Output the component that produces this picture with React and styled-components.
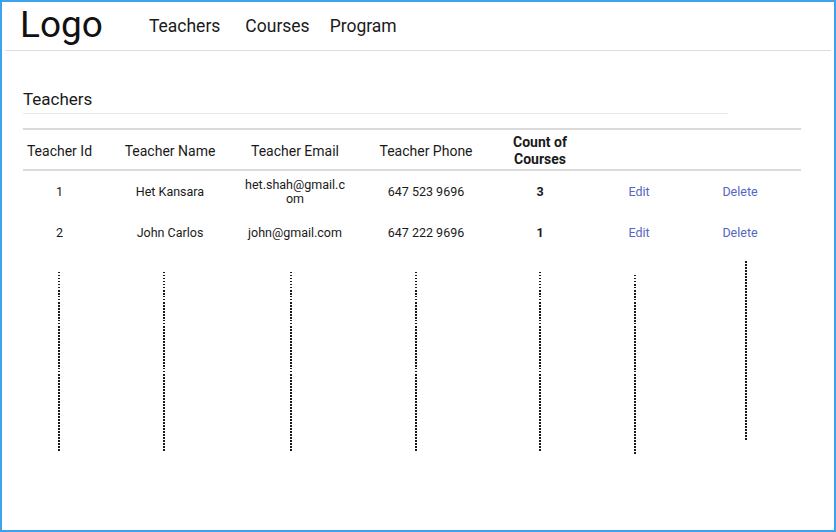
import React from "react";
import styled, { createGlobalStyle } from "styled-components";

const GlobalStyle = createGlobalStyle`
  body {
    margin: 0;
    font-family: Roboto, "Liberation Sans", Arial, sans-serif;
    color: #1a1a1a;
    background: #fff;
  }
`;

const teachers = [
  { id: 1, name: "Het Kansara", email: "het.shah@gmail.com", phone: "647 523 9696", count: 3 },
  { id: 2, name: "John Carlos", email: "john@gmail.com", phone: "647 222 9696", count: 1 },
];

// hand drawn "and so on" marks under each column
const dots = [
  { dx: -1, top: 19, len: 180 },
  { dx: -6, top: 19, len: 180 },
  { dx: -4, top: 19, len: 180 },
  { dx: -10, top: 19, len: 180 },
  { dx: 0, top: 19, len: 180 },
  { dx: -4, top: 22, len: 180 },
  { dx: 6, top: 8, len: 179 },
];

const columns = "73px 148px 102px 160px 68px 130px 72px";

const Frame = styled.div`
  width: 836px;
  height: 532px;
  box-sizing: border-box;
  border: 2px solid #3fa2ec;
  overflow: hidden;
`;

const Header = styled.header`
  display: flex;
  align-items: flex-start;
  height: 49px;
  box-sizing: border-box;
  margin: 0 3px;
  padding-left: 15px;
  border-bottom: 1px solid #dedede;
`;

const Logo = styled.div`
  font-size: 37px;
  line-height: 40px;
  margin-top: 3px;
  margin-right: 46px;
  color: #111;
`;

const Nav = styled.nav`
  display: flex;
  gap: 20px;
  margin-top: 14px;
`;

const NavLink = styled.a`
  font-size: 17.5px;
  line-height: 20px;
  color: #1a1a1a;
  text-decoration: none;
  cursor: pointer;

  &:first-child {
    margin-right: 5px;
  }
`;

const Main = styled.main`
  padding: 38px 0 0 21px;
`;

const Title = styled.h2`
  width: 705px;
  margin: 0;
  font-size: 17px;
  font-weight: 400;
  line-height: 20px;
  padding-bottom: 4px;
  border-bottom: 1px solid #e8e8e8;
`;

const Grid = styled.div`
  margin-top: 14px;
  width: 778px;
`;

const Row = styled.div`
  display: grid;
  grid-template-columns: ${columns};
  padding: ${(p) => (p.$head ? "3px 25px 0 0" : "0 25px 0 0")};
  box-sizing: border-box;
  height: ${(p) => (p.$head ? "43px" : "41px")};
  border-top: ${(p) => (p.$head ? "2px solid #dadada" : "none")};
  border-bottom: ${(p) => (p.$head ? "2px solid #dadada" : "none")};
  font-size: ${(p) => (p.$head ? "14px" : "12.5px")};
  line-height: ${(p) => (p.$head ? "17px" : "14px")};
`;

const Cell = styled.div`
  display: flex;
  align-items: center;
  justify-content: center;
  text-align: center;
  overflow-wrap: anywhere;
  font-weight: ${(p) => (p.$bold ? 700 : 400)};
  color: ${(p) => (p.$link ? "#5566c0" : "#1a1a1a")};
  cursor: ${(p) => (p.$link ? "pointer" : "default")};
`;

const DotRow = styled.div`
  display: grid;
  grid-template-columns: ${columns};
  padding-right: 25px;
  align-items: start;
`;

const Dots = styled.span`
  display: block;
  width: 2px;
  justify-self: start;
  background: repeating-linear-gradient(#1a1a1a 0 1.5px, transparent 1.5px 3px);
`;

export default function App() {
  return (
    <>
      <GlobalStyle />
      <Frame>
        <Header>
          <Logo>Logo</Logo>
          <Nav>
            <NavLink>Teachers</NavLink>
            <NavLink>Courses</NavLink>
            <NavLink>Program</NavLink>
          </Nav>
        </Header>
        <Main>
          <Title>Teachers</Title>
          <Grid>
            <Row $head>
              <Cell>Teacher Id</Cell>
              <Cell>Teacher Name</Cell>
              <Cell>Teacher Email</Cell>
              <Cell>Teacher Phone</Cell>
              <Cell $bold>Count of Courses</Cell>
              <Cell />
              <Cell />
            </Row>
            {teachers.map((t) => (
              <Row key={t.id}>
                <Cell>{t.id}</Cell>
                <Cell>{t.name}</Cell>
                <Cell>{t.email}</Cell>
                <Cell>{t.phone}</Cell>
                <Cell $bold>{t.count}</Cell>
                <Cell $link>Edit</Cell>
                <Cell $link>Delete</Cell>
              </Row>
            ))}
            <DotRow>
              {dots.map((d, i) => (
                <Dots
                  key={i}
                  style={{
                    marginTop: d.top,
                    height: d.len,
                    marginLeft: `calc(50% + ${d.dx - 1}px)`,
                  }}
                />
              ))}
            </DotRow>
          </Grid>
        </Main>
      </Frame>
    </>
  );
}
